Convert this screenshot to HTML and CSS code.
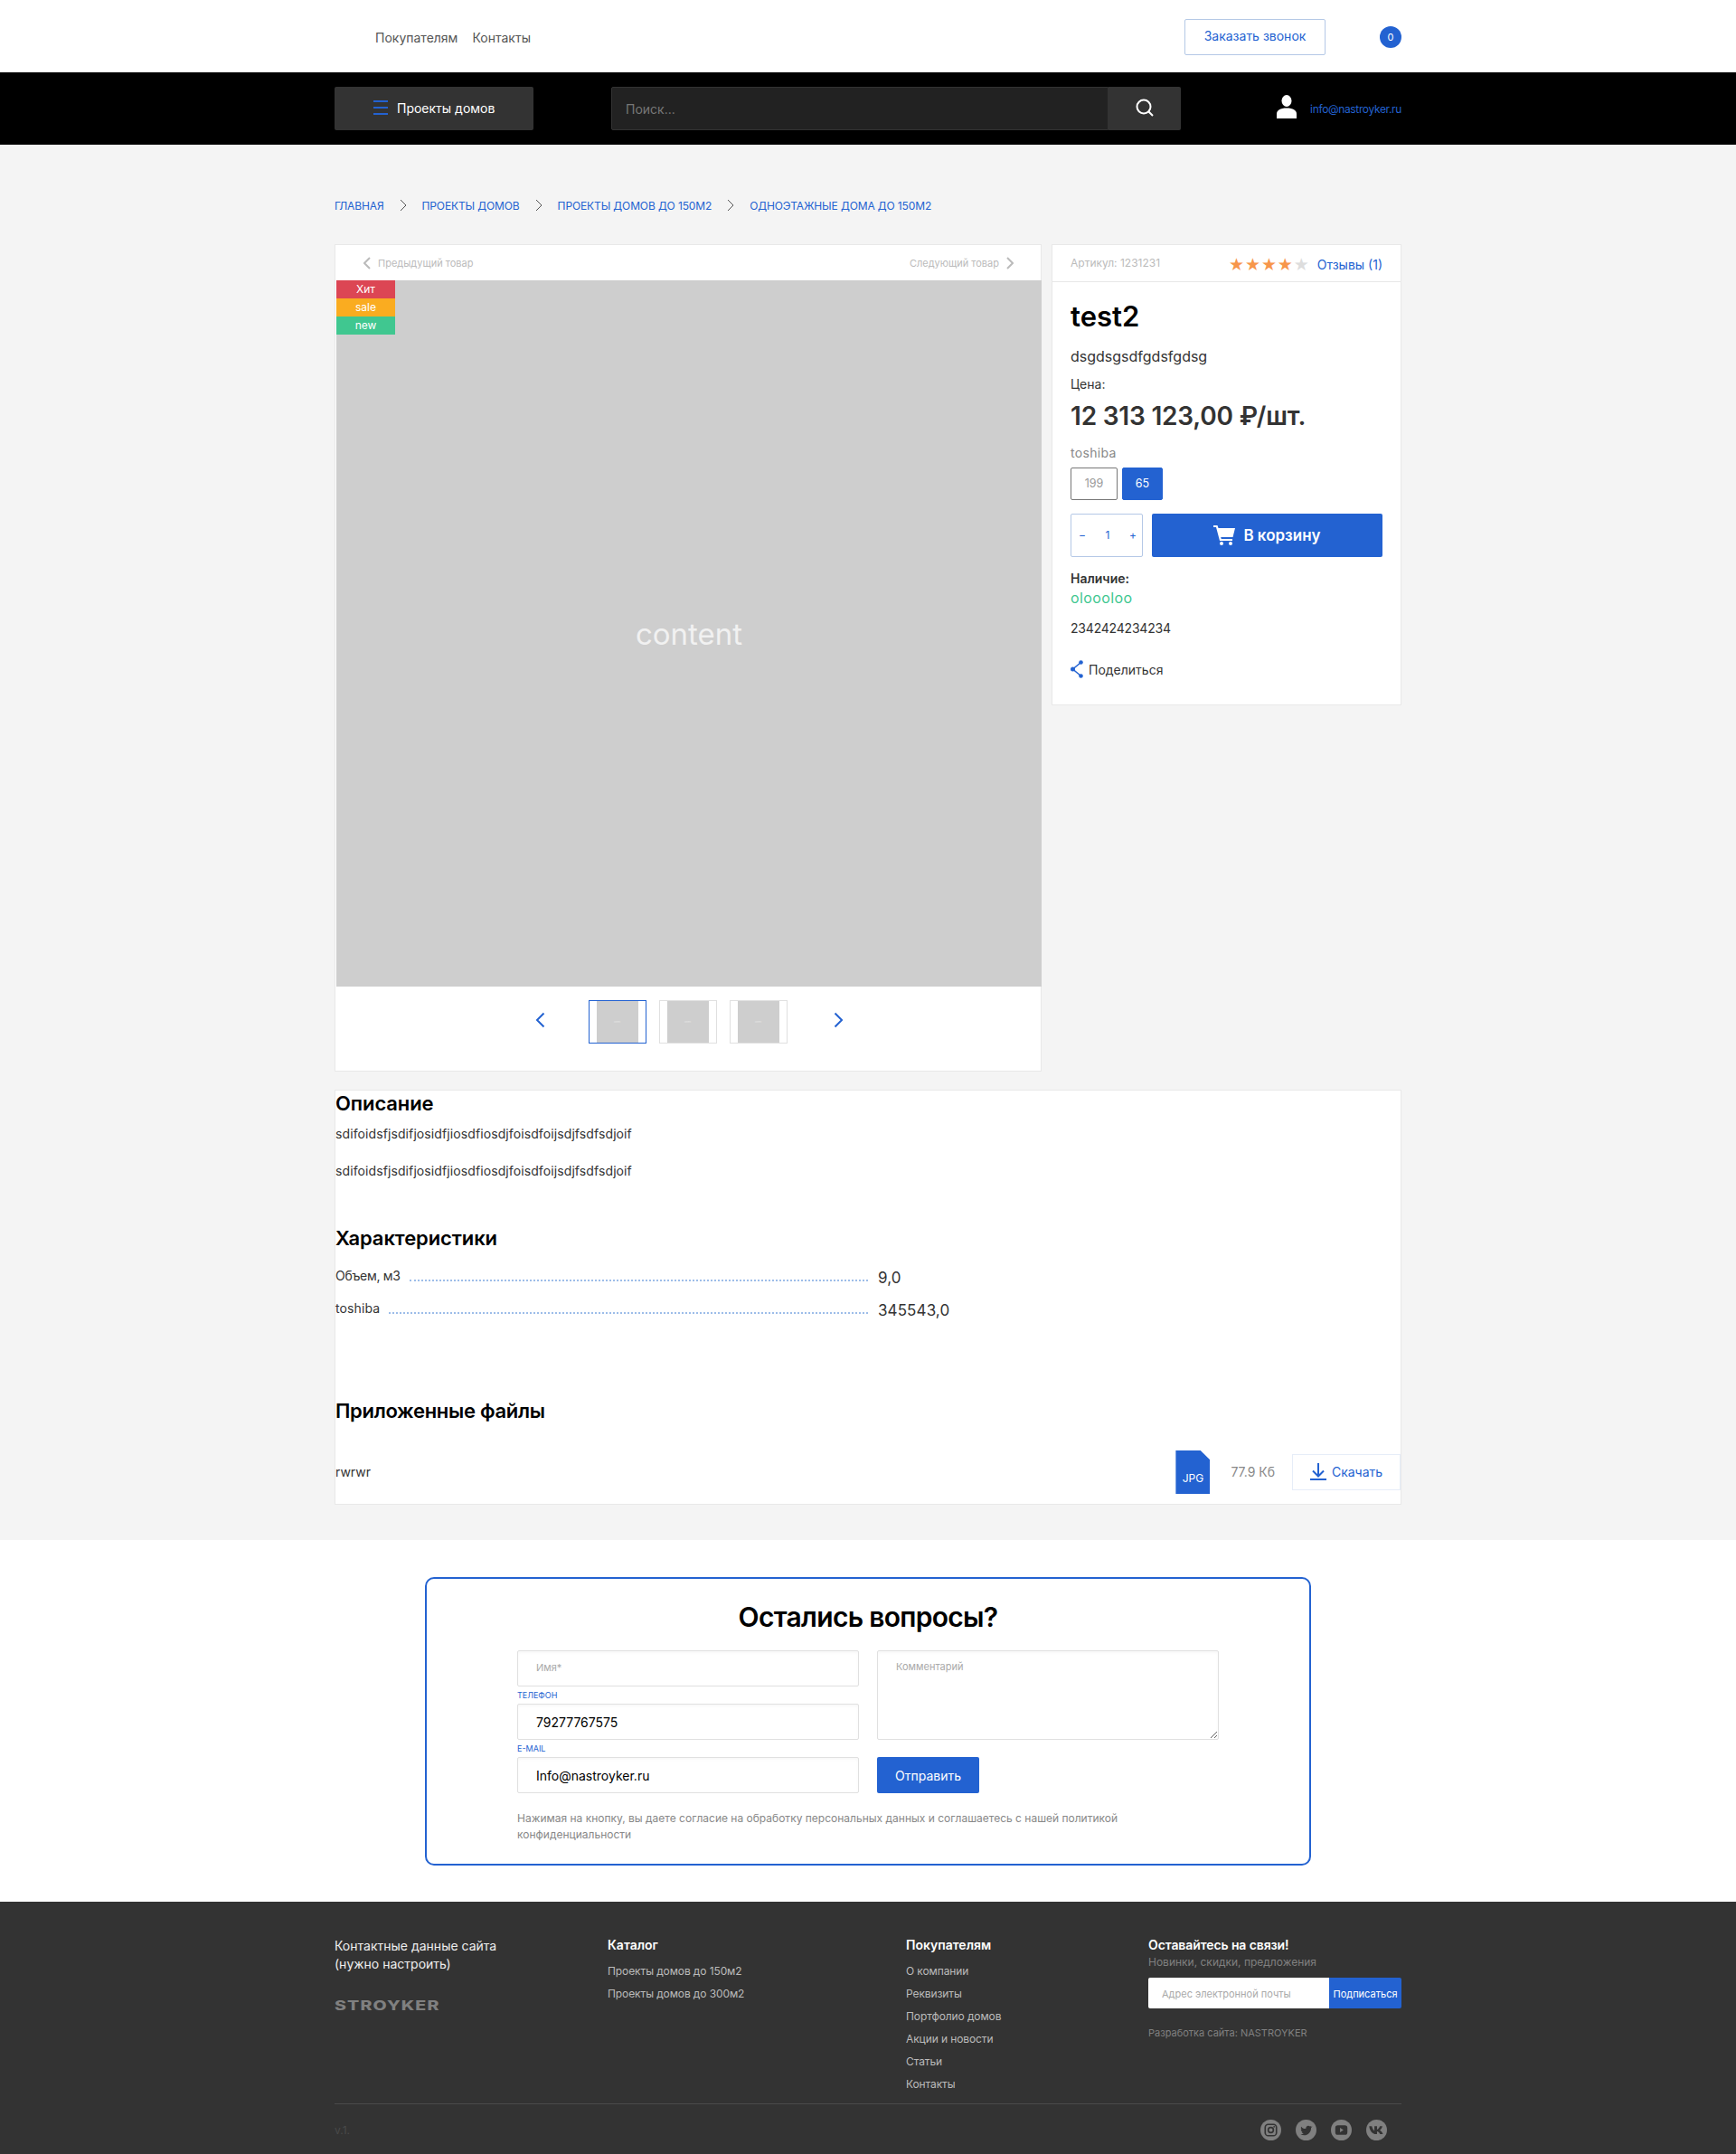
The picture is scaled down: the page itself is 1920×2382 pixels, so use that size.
FILE: index.html
```html
<!DOCTYPE html>
<html lang="ru">
<head>
    <meta charset="UTF-8">
    <meta name="viewport" content="width=device-width, initial-scale=1.0">
    <title>test2 - Stroyker</title>
    <link rel="stylesheet" href="styles.css">
</head>
<body>
    <div class="top-bar">
        <div class="container top-inner">
            <nav class="top-links">
                <a href="#">Покупателям</a>
                <a href="#">Контакты</a>
            </nav>
            <a href="#" class="call-btn">Заказать звонок</a>
            <span class="cart-count">0</span>
        </div>
    </div>

    <header class="main-header">
        <div class="container header-inner">
            <button class="catalog-btn">
                <span class="burger"><i></i><i></i><i></i></span>
                Проекты домов
            </button>
            <form class="search">
                <input type="text" class="search-input" placeholder="Поиск...">
                <button type="button" class="search-btn" aria-label="Поиск">
                    <svg width="22" height="22" viewBox="0 0 22 22" fill="none" stroke="#fff" stroke-width="2"><circle cx="10" cy="10" r="7.5"/><path d="M15.5 15.5 20 20"/></svg>
                </button>
            </form>
            <div class="user-box">
                <svg width="22" height="26" viewBox="0 0 22 26" fill="#fff"><ellipse cx="11" cy="6.5" rx="5.5" ry="6.5"/><path d="M0 26v-5c0-4 4-6.500 11-6.500S22 17 22 21v5z"/></svg>
                <a href="#" class="user-mail">info@nastroyker.ru</a>
            </div>
        </div>
    </header>

    <main class="main">
        <div class="container">
            <div class="breadcrumbs">
                <a href="#">Главная</a>
                <svg class="crumb-sep" width="8" height="14" viewBox="0 0 8 14" fill="none" stroke="#555"><path d="M1 1l6 6-6 6"/></svg>
                <a href="#">Проекты домов</a>
                <svg class="crumb-sep" width="8" height="14" viewBox="0 0 8 14" fill="none" stroke="#555"><path d="M1 1l6 6-6 6"/></svg>
                <a href="#">Проекты домов до 150м2</a>
                <svg class="crumb-sep" width="8" height="14" viewBox="0 0 8 14" fill="none" stroke="#555"><path d="M1 1l6 6-6 6"/></svg>
                <a href="#">Одноэтажные дома до 150м2</a>
            </div>

            <div class="product">
                <section class="gallery">
                    <div class="gallery-nav">
                        <a href="#" class="gallery-link">
                            <svg width="8" height="14" viewBox="0 0 8 14" fill="none" stroke="#bbb" stroke-width="2"><path d="M7 1 1 7l6 6"/></svg>
                            Предыдущий товар
                        </a>
                        <a href="#" class="gallery-link">
                            Следующий товар
                            <svg width="8" height="14" viewBox="0 0 8 14" fill="none" stroke="#bbb" stroke-width="2"><path d="m1 1 6 6-6 6"/></svg>
                        </a>
                    </div>
                    <div class="gallery-image">
                        <div class="labels">
                            <span class="label label-hit">Хит</span>
                            <span class="label label-sale">sale</span>
                            <span class="label label-new">new</span>
                        </div>
                        content
                    </div>
                    <div class="thumbs">
                        <svg class="thumb-arrow" width="11" height="18" viewBox="0 0 11 18" fill="none" stroke="#2362d1" stroke-width="2"><path d="M9.500 1.500 2 9l7.500 7.500"/></svg>
                        <div class="thumb-list">
                            <div class="thumb thumb-active"><div class="thumb-img">content</div></div>
                            <div class="thumb"><div class="thumb-img">content</div></div>
                            <div class="thumb"><div class="thumb-img">content</div></div>
                        </div>
                        <svg class="thumb-arrow" width="11" height="18" viewBox="0 0 11 18" fill="none" stroke="#2362d1" stroke-width="2"><path d="M1.500 1.500 9 9l-7.500 7.500"/></svg>
                    </div>
                </section>

                <aside class="info">
                    <div class="info-head">
                        <span class="sku">Артикул: 1231231</span>
                        <div class="rating">
                            <span class="stars">★★★★<span class="star-off">★</span></span>
                            <a href="#" class="reviews">Отзывы (1)</a>
                        </div>
                    </div>
                    <div class="info-body">
                        <h1 class="product-title">test2</h1>
                        <p class="product-desc">dsgdsgsdfgdsfgdsg</p>
                        <p class="price-label">Цена:</p>
                        <p class="price">12 313 123,00 ₽/шт.</p>
                        <p class="option-name">toshiba</p>
                        <div class="options">
                            <span class="option">199</span>
                            <span class="option option-active">65</span>
                        </div>
                        <div class="buy-row">
                            <div class="qty">
                                <span>−</span>
                                <span>1</span>
                                <span>+</span>
                            </div>
                            <button class="buy-btn">
                                <svg width="24" height="22" viewBox="0 0 24 22" fill="#fff"><path d="M0 0h4.500l1 3H24l-2.500 10H8.200l.5 2H21v2H7L3 2H0z"/><circle cx="9" cy="20" r="2"/><circle cx="19" cy="20" r="2"/></svg>
                                В корзину
                            </button>
                        </div>
                        <p class="stock-label">Наличие:</p>
                        <p class="stock">oloooloo</p>
                        <p class="code">2342424234234</p>
                        <a href="#" class="share">
                            <svg width="14" height="20" viewBox="0 0 14 20" fill="none" stroke="#2362d1" stroke-width="1.500"><path d="M11.500 2.500 2.500 10l9 7.500"/><g fill="#2362d1" stroke="none"><circle cx="11.500" cy="2.500" r="2.300"/><circle cx="2.500" cy="10" r="2.500"/><circle cx="11.500" cy="17.500" r="2.300"/></g></svg>
                            Поделиться
                        </a>
                    </div>
                </aside>
            </div>

            <section class="details">
                <h2 class="details-title">Описание</h2>
                <p class="details-text">sdifoidsfjsdifjosidfjiosdfiosdjfoisdfoijsdjfsdfsdjoif</p>
                <p class="details-text">sdifoidsfjsdifjosidfjiosdfiosdjfoisdfoijsdjfsdfsdjoif</p>

                <h2 class="details-title specs-title">Характеристики</h2>
                <div class="spec-row">
                    <span class="spec-name">Объем, м3</span>
                    <span class="spec-dots"></span>
                    <span class="spec-value">9,0</span>
                </div>
                <div class="spec-row">
                    <span class="spec-name spec-name-latin">toshiba</span>
                    <span class="spec-dots"></span>
                    <span class="spec-value">345543,0</span>
                </div>

                <h2 class="details-title files-title">Приложенные файлы</h2>
                <div class="file-row">
                    <span class="file-name">rwrwr</span>
                    <span class="file-icon">JPG</span>
                    <span class="file-size">77.9 Кб</span>
                    <a href="#" class="file-btn">
                        <svg width="18" height="19" viewBox="0 0 18 19" fill="none" stroke="#2362d1" stroke-width="2"><path d="M9 0v14M3 8.500l6 6 6-6M0 18h18"/></svg>
                        Скачать
                    </a>
                </div>
            </section>
        </div>
    </main>

    <section class="feedback">
        <div class="feedback-card">
            <h2 class="feedback-title">Остались вопросы?</h2>
            <form class="feedback-form">
                <div class="form-col">
                    <input type="text" class="field field-name" placeholder="Имя*">
                    <label class="field-label">Телефон</label>
                    <input type="text" class="field" value="79277767575">
                    <label class="field-label">E-mail</label>
                    <input type="text" class="field" value="Info@nastroyker.ru">
                </div>
                <div class="form-col">
                    <textarea class="field field-area" placeholder="Комментарий"></textarea>
                    <button type="button" class="send-btn">Отправить</button>
                </div>
            </form>
            <p class="agree">Нажимая на кнопку, вы даете согласие на обработку персональных данных и соглашаетесь с нашей политикой конфиденциальности</p>
        </div>
    </section>

    <footer class="footer">
        <div class="container">
            <div class="footer-cols">
                <div class="footer-about">
                    <p class="footer-contacts">Контактные данные сайта<br>(нужно настроить)</p>
                    <div class="footer-logo">STROYKER</div>
                </div>
                <div class="footer-col">
                    <h4>Каталог</h4>
                    <a href="#">Проекты домов до 150м2</a>
                    <a href="#">Проекты домов до 300м2</a>
                </div>
                <div class="footer-col">
                    <h4>Покупателям</h4>
                    <a href="#">О компании</a>
                    <a href="#">Реквизиты</a>
                    <a href="#">Портфолио домов</a>
                    <a href="#">Акции и новости</a>
                    <a href="#">Статьи</a>
                    <a href="#">Контакты</a>
                </div>
                <div class="footer-sub">
                    <h4>Оставайтесь на связи!</h4>
                    <p class="sub-note">Новинки, скидки, предложения</p>
                    <form class="sub-form">
                        <input type="text" class="sub-input" placeholder="Адрес электронной почты">
                        <button type="button" class="sub-btn">Подписаться</button>
                    </form>
                    <p class="dev-note">Разработка сайта: NASTROYKER</p>
                </div>
            </div>
            <div class="footer-bottom">
                <span class="version">v.1.</span>
                <div class="socials">
                    <svg width="23" height="23" viewBox="0 0 24 24"><circle cx="12" cy="12" r="12" fill="#808080"/><rect x="5.500" y="5.500" width="13" height="13" rx="3.500" fill="none" stroke="#333" stroke-width="1.700"/><circle cx="12" cy="12" r="3" fill="none" stroke="#333" stroke-width="1.700"/><circle cx="15.800" cy="8.200" r="0.900" fill="#333"/></svg>
                    <svg width="23" height="23" viewBox="0 0 24 24"><circle cx="12" cy="12" r="12" fill="#808080"/><path d="M18.500 8.200c-.5.2-1 .4-1.500.4.500-.3 1-.8 1.200-1.400-.5.300-1.100.5-1.700.7a2.700 2.700 0 0 0-4.600 2.400C9.600 10.700 7.700 9.700 6.400 8c-.7 1.200-.4 2.800.8 3.600-.4 0-.8-.1-1.200-.3 0 1.300.9 2.400 2.100 2.700-.4.100-.8.100-1.200 0 .3 1.100 1.300 1.800 2.500 1.900-1.100.8-2.500 1.200-3.900 1 5.700 3.200 12.400-.4 12.300-7.500.6-.4 1.100-.9 1.500-1.500z" fill="#333"/></svg>
                    <svg width="23" height="23" viewBox="0 0 24 24"><circle cx="12" cy="12" r="12" fill="#808080"/><rect x="5" y="6.500" width="14" height="11" rx="3" fill="#333"/><path d="M10.500 9.500v5l4-2.500z" fill="#808080"/></svg>
                    <svg width="23" height="23" viewBox="0 0 24 24"><circle cx="12" cy="12" r="12" fill="#808080"/><path d="M3.500 7.500h3c.8 3 2 4.800 3 5.300V7.500h3v4c1.500-.4 2.700-2.300 3.200-4h3c-.4 2.200-1.900 4-3 4.800 1.300.7 2.900 2.200 3.600 4.500h-3.300c-.6-1.600-2-3-3.500-3.200v3.200h-1C7.500 16.800 4 13 3.500 7.500z" fill="#333"/></svg>
                </div>
            </div>
        </div>
    </footer>
</body>
</html>
```

FILE: styles.css
```css
* {
    margin: 0;
    padding: 0;
    box-sizing: border-box;
}

body {
    font-family: 'Inter', 'Liberation Sans', sans-serif;
    background: #fff;
    color: #333;
    font-size: 14px;
}

a {
    text-decoration: none;
    color: inherit;
}

.container {
    width: 1180px;
    margin: 0 auto;
}

/* top bar */
.top-bar {
    height: 80px;
    background: #fff;
}

.top-inner {
    display: flex;
    align-items: center;
    height: 100%;
    padding: 2px 0 0 45px;
}

.top-links {
    display: flex;
    gap: 16px;
    font-size: 14px;
    color: #555;
}

.call-btn {
    margin-left: auto;
    width: 156px;
    height: 40px;
    line-height: 36px;
    text-align: center;
    border: 1px solid #b4c8e6;
    border-radius: 2px;
    color: #2362d1;
    font-size: 14px;
}

.cart-count {
    width: 24px;
    height: 24px;
    line-height: 24px;
    margin-left: 60px;
    border-radius: 50%;
    background: #2362d1;
    color: #fff;
    text-align: center;
    font-size: 11px;
}

/* black header */
.main-header {
    height: 80px;
    background: #000;
}

.header-inner {
    display: flex;
    align-items: center;
    height: 100%;
}

.catalog-btn {
    display: flex;
    align-items: center;
    gap: 10px;
    width: 220px;
    height: 48px;
    padding: 0 0 2px 43px;
    background: #333;
    color: #fff;
    border: none;
    border-radius: 2px;
    font: 14px 'Inter', sans-serif;
}

.burger {
    display: flex;
    flex-direction: column;
    gap: 5px;
    width: 16px;
}

.burger i {
    height: 2px;
    background: #2362d1;
}

.search {
    display: flex;
    width: 630px;
    height: 48px;
    margin-left: 86px;
}

.search-input {
    flex: 1;
    background: #222;
    border: 1px solid #333;
    border-radius: 2px 0 0 2px;
    padding: 0 15px;
    color: #fff;
    font: 14px 'Inter', sans-serif;
}

.search-input::placeholder {
    color: #777;
}

.search-btn {
    width: 80px;
    background: #333;
    border: none;
    border-radius: 0 2px 2px 0;
}

.user-box {
    display: flex;
    align-items: center;
    gap: 15px;
    margin-left: auto;
}

.user-box svg {
    margin-top: -5px;
}

.user-mail {
    color: #2362d1;
    font-size: 12px;
    letter-spacing: -0.35px;
}

/* main part */
.main {
    background: #f4f4f4;
    height: 1543px;
    padding-top: 58px;
}

.breadcrumbs {
    display: flex;
    align-items: center;
    gap: 17px;
    height: 18px;
    margin-bottom: 34px;
    color: #2362d1;
    font-size: 12px;
    letter-spacing: -0.12px;
    text-transform: uppercase;
}

.crumb-sep {
    flex: none;
}

.product {
    display: flex;
    align-items: flex-start;
    gap: 11px;
    margin-bottom: 20px;
}

.gallery {
    width: 782px;
    height: 915px;
    padding-left: 1px;
    background: #fff;
    border: 1px solid #e8e8e8;
}

.gallery-nav {
    display: flex;
    justify-content: space-between;
    align-items: center;
    height: 39px;
    padding: 0 30px;
}

.gallery-link {
    display: flex;
    align-items: center;
    gap: 8px;
    color: #bbb;
    font-size: 11px;
}

.gallery-image {
    position: relative;
    display: flex;
    justify-content: center;
    align-items: center;
    width: 780px;
    height: 781px;
    background: #cecece;
    color: #f1f1f1;
    font-size: 33px;
}

.labels {
    position: absolute;
    top: 0;
    left: 0;
    display: flex;
    flex-direction: column;
    width: 65px;
}

.label {
    height: 20px;
    line-height: 20px;
    text-align: center;
    color: #fff;
    font-size: 12px;
}

.label-hit { background: #dc4654; }
.label-sale { background: #faac20; }
.label-new { background: #40c790; }

.thumbs {
    display: flex;
    justify-content: center;
    align-items: flex-start;
    gap: 50px;
    width: 780px;
    padding-top: 15px;
}

.thumb-arrow {
    margin-top: 13px;
}

.thumb-list {
    display: flex;
    gap: 14px;
    margin: 0 1px 0 -2px;
}

.thumb {
    display: flex;
    justify-content: center;
    width: 64px;
    height: 48px;
    padding: 0;
    border: 1px solid #e0e0e0;
}

.thumb-active {
    border-color: #2362d1;
}

.thumb-img {
    display: flex;
    justify-content: center;
    align-items: center;
    width: 46px;
    height: 100%;
    background: #cecece;
    color: #e8e8e8;
    font-size: 2px;
}

/* right card */
.info {
    width: 387px;
    height: 510px;
    background: #fff;
    border: 1px solid #e8e8e8;
}

.info-head {
    display: flex;
    justify-content: space-between;
    align-items: center;
    height: 41px;
    padding: 0 20px;
    border-bottom: 1px solid #e8e8e8;
}

.sku {
    color: #bbb;
    font-size: 12px;
    margin-top: -2px;
}

.rating {
    display: flex;
    align-items: center;
    gap: 8px;
    height: 20px;
    margin-top: 2px;
}

.stars {
    color: #f7964b;
    font-size: 19px;
    line-height: 20px;
    letter-spacing: 0.9px;
    font-family: 'DejaVu Sans', sans-serif;
}

.star-off {
    color: #ddd;
}

.reviews {
    color: #2362d1;
    font-size: 14px;
}

.info-body {
    padding: 20px 20px 0;
}

.product-title {
    font-size: 31px;
    font-weight: 600;
    line-height: 36px;
    color: #000;
}

.product-desc {
    margin-top: 16px;
    font-size: 16px;
    line-height: 20px;
}

.price-label {
    margin-top: 12px;
    font-size: 14px;
    line-height: 18px;
}

.price {
    margin-top: 9px;
    font-size: 28px;
    font-weight: 600;
    line-height: 34px;
    letter-spacing: -0.2px;
}

.option-name {
    margin-top: 15px;
    font-size: 14px;
    line-height: 18px;
    color: #888;
    letter-spacing: 0.3px;
}

.options {
    display: flex;
    gap: 5px;
    margin-top: 7px;
}

.option {
    width: 52px;
    height: 36px;
    line-height: 34px;
    text-align: center;
    border: 1px solid #777;
    border-radius: 2px;
    color: #999;
    font-size: 12.5px;
}

.option-active {
    width: 45px;
    background: #2362d1;
    border-color: #2362d1;
    color: #fff;
}

.buy-row {
    display: flex;
    gap: 10px;
    margin-top: 15px;
}

.qty {
    display: flex;
    justify-content: space-between;
    align-items: center;
    width: 80px;
    height: 48px;
    padding: 0 6px 2px 8px;
    border: 1px solid #b4c8e6;
    border-radius: 2px;
    color: #2362d1;
    font-size: 12px;
}

.buy-btn {
    display: flex;
    justify-content: center;
    align-items: center;
    gap: 9px;
    width: 255px;
    height: 48px;
    background: #2362d1;
    color: #fff;
    border: none;
    border-radius: 2px;
    font: 600 17px 'Inter', sans-serif;
}

.stock-label {
    margin-top: 15px;
    font-size: 14px;
    font-weight: 600;
    line-height: 18px;
}

.stock {
    margin-top: 1px;
    font-size: 16px;
    line-height: 22px;
    letter-spacing: 0.4px;
    color: #40c790;
}

.code {
    margin-top: 13px;
    font-size: 14px;
    line-height: 20px;
    letter-spacing: -0.2px;
}

.share {
    display: flex;
    align-items: center;
    gap: 6px;
    margin-top: 25px;
    font-size: 14px;
}

/* description */
.details {
    height: 459px;
    background: #fff;
    border: 1px solid #e8e8e8;
}

.details-title {
    font-size: 22px;
    font-weight: 600;
    line-height: 28px;
    letter-spacing: -0.1px;
    color: #000;
}

.details-text {
    margin-top: 13px;
    margin-bottom: 27px;
    font-size: 14px;
    line-height: 14px;
    letter-spacing: 0.1px;
}

.details-text + .details-text {
    margin-top: 0;
}

.specs-title {
    margin-top: 53px;
}

.spec-row {
    display: flex;
    align-items: flex-end;
    width: 750px;
    height: 36px;
}

.specs-title + .spec-row {
    margin-top: 8px;
}

.spec-name {
    font-size: 14px;
    line-height: 16px;
    margin-bottom: 8px;
    letter-spacing: -0.3px;
}

.spec-name-latin {
    letter-spacing: 0.1px;
}

.spec-dots {
    flex: 1;
    height: 2px;
    margin: 0 11px 10px 10px;
    border-bottom: 2px dotted #9dbde9;
}

.spec-value {
    width: 150px;
    font-size: 17px;
    line-height: 20px;
    margin-bottom: 4px;
    letter-spacing: 0.1px;
}

.files-title {
    margin-top: 83px;
    letter-spacing: -0.3px;
}

.file-row {
    display: flex;
    align-items: center;
    margin-top: 30px;
}

.file-name {
    flex: 1;
    font-size: 14px;
    margin-bottom: 2px;
}

.file-icon {
    width: 38px;
    height: 48px;
    padding-top: 23px;
    text-align: center;
    background: #2362d1;
    color: #fff;
    font-size: 12px;
    clip-path: polygon(0 0, 72% 0, 100% 22%, 100% 100%, 0 100%);
}

.file-size {
    margin: 0 0 2px 23px;
    color: #888;
    font-size: 14px;
}

.file-btn {
    display: flex;
    justify-content: center;
    align-items: center;
    gap: 6px;
    width: 120px;
    height: 40px;
    margin-left: 19px;
    padding-bottom: 2px;
    border: 1px solid #e6edf8;
    color: #2362d1;
    font-size: 14px;
}

/* question form */
.feedback {
    height: 400px;
    padding-top: 41px;
    background: #fff;
}

.feedback-card {
    width: 980px;
    height: 319px;
    margin: 0 auto;
    padding: 22px 100px 0;
    border: 2px solid #2362d1;
    border-radius: 10px;
}

.feedback-title {
    font-size: 30px;
    font-weight: 600;
    line-height: 40px;
    letter-spacing: -0.7px;
    text-align: center;
    color: #000;
}

.feedback-form {
    display: flex;
    gap: 20px;
    margin-top: 17px;
}

.form-col {
    display: flex;
    flex-direction: column;
    width: 378px;
}

.field {
    width: 100%;
    height: 40px;
    padding: 0 20px;
    background: #fff;
    border: 1px solid #e0e0e0;
    border-radius: 2px;
    box-shadow: inset 0 2px 3px rgba(0, 0, 0, 0.03);
    color: #000;
    font: 14px 'Inter', sans-serif;
}

.field::placeholder {
    color: #aaa;
    font-size: 11px;
}

.field-name {
    padding-bottom: 6px;
}

.field-area {
    height: 99px;
    padding-top: 10px;
    resize: vertical;
}

.field-label {
    height: 19px;
    line-height: 20px;
    color: #2362d1;
    font-size: 9px;
    text-transform: uppercase;
}

.send-btn {
    width: 113px;
    height: 40px;
    margin-top: 19px;
    background: #2362d1;
    color: #fff;
    border: none;
    border-radius: 2px;
    font: 14px 'Inter', sans-serif;
}

.agree {
    width: 680px;
    margin-top: 19px;
    color: #888;
    font-size: 12px;
    line-height: 18px;
}

/* footer */
.footer {
    height: 279px;
    padding-top: 38px;
    background: #333;
    color: #fff;
}

.footer-cols {
    display: flex;
    height: 186px;
    border-bottom: 1px solid #4a4a4a;
}

.footer-about {
    width: 302px;
    padding-top: 1px;
}

.footer-contacts {
    font-size: 14px;
    line-height: 20px;
    color: #eee;
}

.footer-logo {
    margin-top: 27px;
    color: #808080;
    font: 800 14px 'Inter', sans-serif;
    letter-spacing: 0.8px;
    transform: scaleX(1.4);
    transform-origin: left;
}

.footer-col {
    display: flex;
    flex-direction: column;
    width: 330px;
}

.footer-col + .footer-col {
    width: 268px;
}

.footer-col h4,
.footer-sub h4 {
    font-size: 14px;
    font-weight: 600;
    line-height: 20px;
}

.footer-sub h4 {
    letter-spacing: -0.1px;
}

.footer-col h4 {
    margin-bottom: 5.5px;
}

.footer-col a {
    height: 25px;
    line-height: 25px;
    color: #bbb;
    font-size: 12px;
    letter-spacing: -0.1px;
}

.footer-sub {
    width: 280px;
}

.sub-note {
    color: #808080;
    font-size: 12px;
    line-height: 18px;
}

.sub-form {
    display: flex;
    height: 34px;
    margin-top: 8px;
}

.sub-input {
    width: 200px;
    padding: 2px 15px 0;
    background: #fff;
    border: none;
    border-radius: 2px 0 0 2px;
    font: 11px 'Inter', sans-serif;
}

.sub-input::placeholder {
    color: #aaa;
}

.sub-btn {
    width: 80px;
    padding-top: 2px;
    background: #2362d1;
    color: #fff;
    border: none;
    border-radius: 0 2px 2px 0;
    font: 11px 'Inter', sans-serif;
}

.dev-note {
    margin-top: 18px;
    color: #808080;
    font-size: 11px;
    line-height: 18px;
}

.footer-bottom {
    display: flex;
    justify-content: space-between;
    align-items: center;
    height: 56px;
    padding-right: 16px;
}

.version {
    color: #4a4a4a;
    font-size: 12px;
}

.socials {
    display: flex;
    gap: 16px;
}
```
